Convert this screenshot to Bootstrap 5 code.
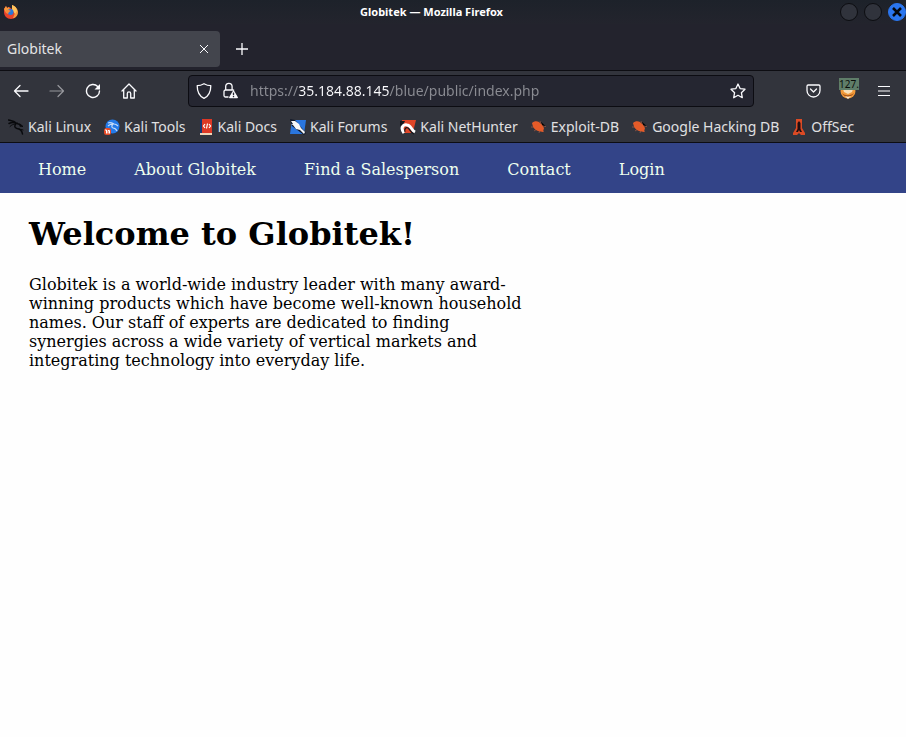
<!DOCTYPE html>
<html lang="en">
<head>
<meta charset="utf-8">
<meta name="viewport" content="width=device-width, initial-scale=1">
<title>Globitek</title>
<link href="https://cdn.jsdelivr.net/npm/bootstrap@5.3.0/dist/css/bootstrap.min.css" rel="stylesheet">
<style>
  body { background: #fefefe; color: #000; font-family: "DejaVu Serif", serif; font-size: 16px; }
  .browser { font-family: "Noto Sans", sans-serif; font-size: 14px; line-height: 20px; color: #e4e4e6; background: #32343c; }
  .browser button { color: #fbfbfe; background: none; border: 0; padding: 0; line-height: 0; }
  .browser svg { display: block; flex: none; }
  .titlebar { height: 24px; background: linear-gradient(#1d222a, #23242d); padding-left: 3px; }
  .titlebar .caption { font-size: 11px; font-weight: 700; color: #fff; padding-left: 4px; }
  .titlebar .wins { gap: 6px; }
  .titlebar .wins button { width: 18px; height: 18px; border-radius: 50%; border: 1px solid #0c0d11; background: #30333c; }
  .titlebar .wins .win-close { background: #2a75ee; border-color: #2a75ee; color: #05070c; }
  .tabstrip { height: 47px; background: #23232d; border-bottom: 1px solid #0d0d12; padding-top: 7px; }
  .tab-item { width: 220px; height: 36px; background: #43454d; border-radius: 0 4px 4px 0; padding: 0 10px 0 7px; }
  .toolbar { height: 41px; padding: 0 15px 2px 13px; }
  .tools { gap: 20px; }
  .addr { height: 32px; background: #252631; border: 1px solid #0c0c12; border-radius: 4px; padding: 0 7px; margin: 0 52px 0 51px; }
  .addr input { min-width: 0; border: 0; padding: 0; outline: 0; color: transparent; font-size: 14px; line-height: 20px;
    background: linear-gradient(90deg, #8b8c93 48px, #fbfbfe 48px, #fbfbfe 139px, #8b8c93 139px);
    -webkit-background-clip: text; background-clip: text; }
  .exts { gap: 18px; }
  .ext .count { position: absolute; left: 0; top: -3px; width: 20px; height: 12px; background: #5f7d69; color: #0a0f0c; font: 10px/12px "Noto Sans", sans-serif; }
  .bookmarks { height: 31px; padding: 0 8px; gap: 13px; border-bottom: 1px solid #0d0d12; white-space: nowrap; }
  .bookmarks a { color: #e0e0e2; gap: 4px; }
  .site-nav { background: #334488; min-height: 50px; padding: 15px 38px 11px; }
  .site-nav ul { gap: 48px; }
  .site-nav a { color: #eeffee; line-height: 24px; }
  .content { padding: 22px 29px; }
  .content h1 { font-size: 32px; line-height: 38px; font-weight: 700; margin-bottom: 22px; }
  .content p { max-width: 500px; line-height: 19px; }
</style>
</head>
<body>
<header class="browser">
  <div class="titlebar d-flex align-items-center">
    <svg width="16" height="16" viewBox="0 0 16 16" aria-hidden="true"><path fill="#e8422b" d="M1 5 3 2l1 2 2-1 3 2 5 2c1 5-2 8-6 8S1 12 1 8z"/><path fill="#f79a3e" d="M9 1c3 1 6 4 6 7 0 4-3 6-5 6l2-5-3-3zM1 5l2-3 1 2 2-1 1 3-4 3z"/><path fill="#ffc35c" d="M9 1c3 1 5 3 5 6l-2 3-3-5z"/><circle cx="7.500" cy="8" r="3" fill="#2878db"/><path fill="#f48a3a" d="M3 6h3l2 1-2 1-1 2-2-1z"/></svg>
    <div class="caption flex-grow-1 text-center">Globitek — Mozilla Firefox</div>
    <div class="wins d-flex">
      <button aria-label="Minimize"></button>
      <button aria-label="Maximize"></button>
      <button class="win-close d-flex align-items-center justify-content-center" aria-label="Close window"><svg width="10" height="10" viewBox="0 0 10 10" stroke="currentColor" stroke-width="2.500"><path d="m1 1 8 8M9 1 1 9"/></svg></button>
    </div>
  </div>

  <div class="tabstrip d-flex">
    <div class="tab-item d-flex align-items-center justify-content-between">
      <span>Globitek</span>
      <button aria-label="Close tab"><svg width="12" height="12" viewBox="0 0 12 12" fill="none" stroke="currentColor" stroke-width="1"><path d="m2 2 8 8M10 2l-8 8"/></svg></button>
    </div>
    <button class="ms-3 mb-1" aria-label="New tab"><svg width="12" height="12" viewBox="0 0 12 12" fill="none" stroke="currentColor" stroke-width="1.300"><path d="M6 0v12M0 6h12"/></svg></button>
  </div>

  <div class="toolbar d-flex align-items-center">
    <div class="tools d-flex">
      <button aria-label="Back"><svg width="16" height="16" viewBox="0 0 16 16" fill="none" stroke="currentColor" stroke-width="1.300" stroke-linecap="round" stroke-linejoin="round"><path d="M15 8H1.500M7 2.500 1.500 8 7 13.500"/></svg></button>
      <button class="opacity-50" disabled aria-label="Forward"><svg width="16" height="16" viewBox="0 0 16 16" fill="none" stroke="currentColor" stroke-width="1.200" stroke-linecap="round" stroke-linejoin="round"><path d="M1 8h13.500M9 2.500 14.500 8 9 13.500"/></svg></button>
      <button aria-label="Reload"><svg width="16" height="16" viewBox="0 0 16 16" fill="none" stroke="currentColor" stroke-width="1.400" stroke-linecap="round"><path d="M12.700 3.500A6.500 6.500 0 1 0 14.500 8"/><path fill="currentColor" stroke="none" d="M15 1v5.500H9.500z"/></svg></button>
      <button aria-label="Home"><svg width="16" height="16" viewBox="0 0 16 16" fill="none" stroke="currentColor" stroke-width="1.300" stroke-linecap="round" stroke-linejoin="round"><path d="M1 8 8 1l7 7M2.700 6.500V15h3.600v-4.500a1.700 1.700 0 0 1 3.400 0V15h3.600V6.500"/></svg></button>
    </div>
    <div class="addr d-flex align-items-center flex-grow-1">
      <svg width="16" height="16" viewBox="0 0 16 16" fill="none" stroke="#fbfbfe" stroke-width="1.300" stroke-linejoin="round" aria-hidden="true"><path d="M8 .7c2.200 1.300 4.500 2 6.800 2C14.800 8 13 13 8 15.300 3 13 1.200 8 1.200 2.700c2.300 0 4.600-.7 6.800-2z"/></svg>
      <svg class="ms-2 me-1" width="18" height="17" viewBox="0 0 18 17" fill="none" stroke="#fbfbfe" stroke-width="1.300" aria-hidden="true"><path d="M8.500 15h-3A1.500 1.500 0 0 1 4 13.500v-4A1.500 1.500 0 0 1 5.500 8h7A1.500 1.500 0 0 1 14 8.500M5.700 8V4.500a3.200 3.200 0 0 1 6.400 0V8"/><path fill="#fbfbfe" stroke-linejoin="round" d="m13.500 9 3.800 6.500H9.700z"/><path stroke="#252631" d="M13.500 10.500v2.700m0 .8v1.200"/></svg>
      <input class="flex-grow-1 ms-2" type="text" aria-label="Address" value="https://35.184.88.145/blue/public/index.php">
      <button aria-label="Bookmark this page"><svg width="16" height="16" viewBox="0 0 16 16" fill="none" stroke="currentColor" stroke-width="1.300" stroke-linejoin="round"><path d="m8 1 2.100 4.600 4.900.6-3.600 3.500.9 5L8 12.300l-4.300 2.400.9-5L1 6.200l4.900-.6z"/></svg></button>
    </div>
    <div class="exts d-flex align-items-center">
      <button aria-label="Save to Pocket"><svg width="15" height="14" viewBox="0 0 15 14" fill="none" stroke="currentColor" stroke-width="1.300" stroke-linecap="round" stroke-linejoin="round"><path d="M2.200 1h10.600A1.200 1.200 0 0 1 14 2.200V6.500a6.500 6.500 0 0 1-13 0V2.200A1.200 1.200 0 0 1 2.200 1zM4.500 5l3 3 3-3"/></svg></button>
      <button class="ext position-relative" aria-label="FoxyProxy"><svg width="20" height="20" viewBox="0 0 20 20"><circle cx="9" cy="10" r="7.500" fill="#f29a3a"/><path fill="#f8dfb8" d="M4 8h10l-1 3-4 2-4-2z"/><path fill="#a95518" d="M3 12c3 3 8 3 12 0-2 4-9 6-12 0z"/><path fill="#fae9cf" d="M6 15c2 1 4 1 6 0l-3 3z"/></svg><span class="count">127.</span></button>
      <button aria-label="Open menu"><svg width="14" height="12" viewBox="0 0 14 12" stroke="currentColor" stroke-width="1.200"><path d="M1 1.500h12M1 6h12M1 10.500h12"/></svg></button>
    </div>
  </div>

  <nav class="bookmarks d-flex align-items-center" aria-label="Bookmarks">
    <a class="d-flex align-items-center text-decoration-none" href="#"><svg width="16" height="16" viewBox="0 0 16 16" fill="none" stroke="#08090c" stroke-linecap="round"><path stroke-width="1.500" d="M.5 1c3 1 5 .5 7 2.500M1 4.500C4 3 6 3 9 4.500c2 .5 3 1 4 2.500M9 4C6 6 6 8.500 9 9.500c3 .5 5 2 5.500 5.500"/><path d="M2 7.500c2-2 3-2 5-2.500M12 5l3 2.500-3-.5M11 10l4 1"/></svg>Kali Linux</a>
    <a class="d-flex align-items-center text-decoration-none" href="#"><svg width="16" height="16" viewBox="0 0 16 16"><circle cx="8.500" cy="7.500" r="7" fill="#247ae8"/><path fill="none" stroke="#c5dcf8" stroke-width="1.200" d="M4 4c3-1 4 0 6 1 2 0 3 1 4 2M4 7c2-2 4-2 5-2-2 2-1 4 0 4 2 0 3 1 4 3"/><rect y="9" width="7" height="7" rx="2.500" fill="#e84b27"/><path fill="none" stroke="#fff" d="M1 11h1.500v3.500M4 14.500v-3h1.500v3"/></svg>Kali Tools</a>
    <a class="d-flex align-items-center text-decoration-none" href="#"><svg width="15" height="16" viewBox="0 0 15 16"><path fill="#18366f" d="M1 0h3v14H1z"/><path fill="#dd3825" d="M3 0h10v14H3z"/><path fill="#f0d6b8" d="M1 14h12v2H1z"/><path fill="none" stroke="#fff" stroke-width="1.200" d="M6 5 4.500 7 6 9m4-4 1.500 2L10 9M8.500 4.500l-1 5"/></svg>Kali Docs</a>
    <a class="d-flex align-items-center text-decoration-none" href="#"><svg width="16" height="16" viewBox="0 0 16 16"><path fill="#2a76df" d="M2 1h14l-2 14H0z"/><path fill="#101828" d="m0 0 5 1 11 13-2 2L2 7z"/><path fill="#f5f7fa" d="m1 2 4 0 4 3 2 4 4 4-1 2-4-4-4-1-3-4L1 5l2 0z"/></svg>Kali Forums</a>
    <a class="d-flex align-items-center text-decoration-none" href="#"><svg width="16" height="16" viewBox="0 0 16 16"><path fill="#e04628" d="M2 1h14l-2 8-3 5H3z"/><path fill="#15171c" d="M0 2h5L3 6l-3 1z"/><path fill="none" stroke="#fff" stroke-width="3" d="M4 14C0 9 3 5 7 6c4 0 4 5 8 7"/><path fill="none" stroke="#17181d" stroke-width="1.200" d="M5 13c-1-3 1-5 3-4s2 4 6 6"/></svg>Kali NetHunter</a>
    <a class="d-flex align-items-center text-decoration-none" href="#"><svg width="16" height="16" viewBox="0 0 16 16"><path stroke="#805044" d="m2 3 11 10M9 2l2 5 4 .5M0 8h4M3 12l3-2M8 14l1-4"/><path fill="#e45b29" d="M1 4c2-2 5-2 7-1l3 3 2 3-1 4-5-1C4 11 2 9 1 4z"/></svg>Exploit-DB</a>
    <a class="d-flex align-items-center text-decoration-none" href="#"><svg width="16" height="16" viewBox="0 0 16 16"><path stroke="#805044" d="m2 3 11 10M9 2l2 5 4 .5M0 8h4M3 12l3-2M8 14l1-4"/><path fill="#e45b29" d="M1 4c2-2 5-2 7-1l3 3 2 3-1 4-5-1C4 11 2 9 1 4z"/></svg>Google Hacking DB</a>
    <a class="d-flex align-items-center text-decoration-none" href="#"><svg width="15" height="16" viewBox="0 0 15 16"><path fill="#dc4a24" d="M4 0h6v9l3 5v2H9l-2-2-2 2H1v-2l3-5z"/><path fill="#210e10" d="m7 2 1.500 2v6L10 13H8l-1-2-1 2H4l1.500-3V4z"/></svg>OffSec</a>
  </nav>
</header>

<nav class="site-nav" aria-label="Main">
  <ul class="list-unstyled d-flex flex-wrap mb-0">
    <li><a class="text-decoration-none" href="#">Home</a></li>
    <li><a class="text-decoration-none" href="#">About Globitek</a></li>
    <li><a class="text-decoration-none" href="#">Find a Salesperson</a></li>
    <li><a class="text-decoration-none" href="#">Contact</a></li>
    <li><a class="text-decoration-none" href="#">Login</a></li>
  </ul>
</nav>

<main class="content">
  <h1>Welcome to Globitek!</h1>
  <p class="mb-0">Globitek is a world-wide industry leader with many award-winning products which have become well-known household names. Our staff of experts are dedicated to finding synergies across a wide variety of vertical markets and integrating technology into everyday life.</p>
</main>
<script src="https://cdn.jsdelivr.net/npm/bootstrap@5.3.0/dist/js/bootstrap.bundle.min.js"></script>
</body>
</html>
